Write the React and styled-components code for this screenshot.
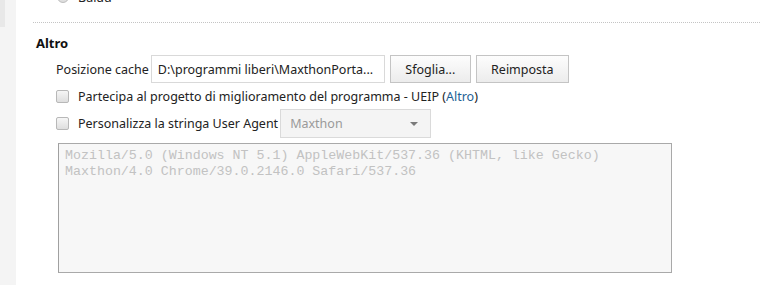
import React from "react";
import styled, { createGlobalStyle } from "styled-components";

const Global = createGlobalStyle`
  html, body { margin: 0; padding: 0; background: #fff; }
  body { font-family: "Noto Sans", "Open Sans", sans-serif; font-size: 12.5px; color: #222; }
`;

const Page = styled.div`
  display: flex;
  height: 285px;
  overflow: hidden;
`;

const Sidebar = styled.div`
  width: 16px;
  flex: none;
  background: #f4f4f4;
  display: flex;
  flex-direction: column;
`;

const SidebarTab = styled.div`
  width: 5px;
  height: 27px;
  background: #e8e8e8;
`;

const Main = styled.div`
  flex: 1;
  padding-left: 17px;
  padding-right: 2px;
  margin-top: -12px;
`;

const RadioRow = styled.div`
  display: flex;
  align-items: center;
  gap: 9px;
  padding-left: 24px;
  height: 18px;
`;

const Radio = styled.span`
  width: 10px;
  height: 10px;
  border-radius: 50%;
  border: 1px solid #bdbdbd;
  background: linear-gradient(#f4f4f4, #dcdcdc);
`;

const Divider = styled.div`
  margin-top: 16px;
  border-top: 1px dotted #c4c4c4;
`;

const SectionTitle = styled.div`
  font-weight: bold;
  font-size: 13px;
  margin-top: 12px;
  padding-left: 3px;
  color: #111;
  line-height: 16px;
`;

const Body = styled.div`
  padding-left: 23px;
  margin-top: 4px;
  display: flex;
  flex-direction: column;
`;

const Row = styled.div`
  display: flex;
  align-items: center;
  height: ${p => p.$h || 27}px;
`;

const Label = styled.span`
  margin-left: ${p => p.$ml || 0}px;
  margin-right: ${p => p.$mr || 0}px;
  white-space: nowrap;
`;

const TextBox = styled.div`
  box-sizing: border-box;
  width: 234px;
  height: 28px;
  border: 1px solid #d9d9d9;
  padding: 0 6px;
  display: flex;
  align-items: center;
  white-space: nowrap;
  overflow: hidden;
  margin-left: 2px;
`;

const Button = styled.button`
  box-sizing: border-box;
  height: 28px;
  width: ${p => p.$w}px;
  margin-left: ${p => p.$ml}px;
  border: 1px solid #c4c4c4;
  background: linear-gradient(#fdfdfd, #ececec);
  font: inherit;
  color: #222;
  padding: 0;
`;

const Check = styled.span`
  width: 11px;
  height: 11px;
  border-radius: 2px;
  border: 1px solid #b8b8b8;
  background: linear-gradient(#f6f6f6, #dedede);
  flex: none;
`;

const Link = styled.span`
  color: #1d5f95;
`;

const Select = styled.div`
  box-sizing: border-box;
  width: 151px;
  height: 29px;
  border: 1px solid #dadada;
  background: #f4f4f4;
  color: #9a9a9a;
  display: flex;
  align-items: center;
  justify-content: space-between;
  padding: 0 12px 0 9px;
`;

const Arrow = styled.span`
  width: 0;
  height: 0;
  border-left: 4px solid transparent;
  border-right: 4px solid transparent;
  border-top: 4px solid #7a7a7a;
`;

const Area = styled.div`
  box-sizing: border-box;
  width: 614px;
  height: 130px;
  margin-top: 5px;
  margin-left: 2px;
  border: 1px solid #a9a9a9;
  border-left-color: #a0a0a0;
  background: #f7f7f7;
  padding: 4px 6px;
  font-family: "Liberation Mono", "Courier New", monospace;
  font-size: 13.3px;
  line-height: 16px;
  color: #c2c2c2;
  white-space: pre;
`;

export default function App() {
  return (
    <>
      <Global />
      <Page>
        <Sidebar>
          <SidebarTab />
        </Sidebar>
        <Main>
          <RadioRow>
            <Radio />
            <span>Baidu</span>
          </RadioRow>
          <Divider />
          <SectionTitle>Altro</SectionTitle>
          <Body>
            <Row $h={28}>
              <Label>Posizione cache</Label>
              <TextBox>D:\programmi liberi\MaxthonPorta...</TextBox>
              <Button $w={81} $ml={5}>Sfoglia...</Button>
              <Button $w={93} $ml={5}>Reimposta</Button>
            </Row>
            <Row $h={26}>
              <Check />
              <Label $ml={9}>
                Partecipa al progetto di miglioramento del programma - UEIP (<Link>Altro</Link>)
              </Label>
            </Row>
            <Row $h={29}>
              <Check />
              <Label $ml={9} $mr={2}>Personalizza la stringa User Agent</Label>
              <Select>
                <span>Maxthon</span>
                <Arrow />
              </Select>
            </Row>
            <Area>{"Mozilla/5.0 (Windows NT 5.1) AppleWebKit/537.36 (KHTML, like Gecko)\nMaxthon/4.0 Chrome/39.0.2146.0 Safari/537.36"}</Area>
          </Body>
        </Main>
      </Page>
    </>
  );
}
